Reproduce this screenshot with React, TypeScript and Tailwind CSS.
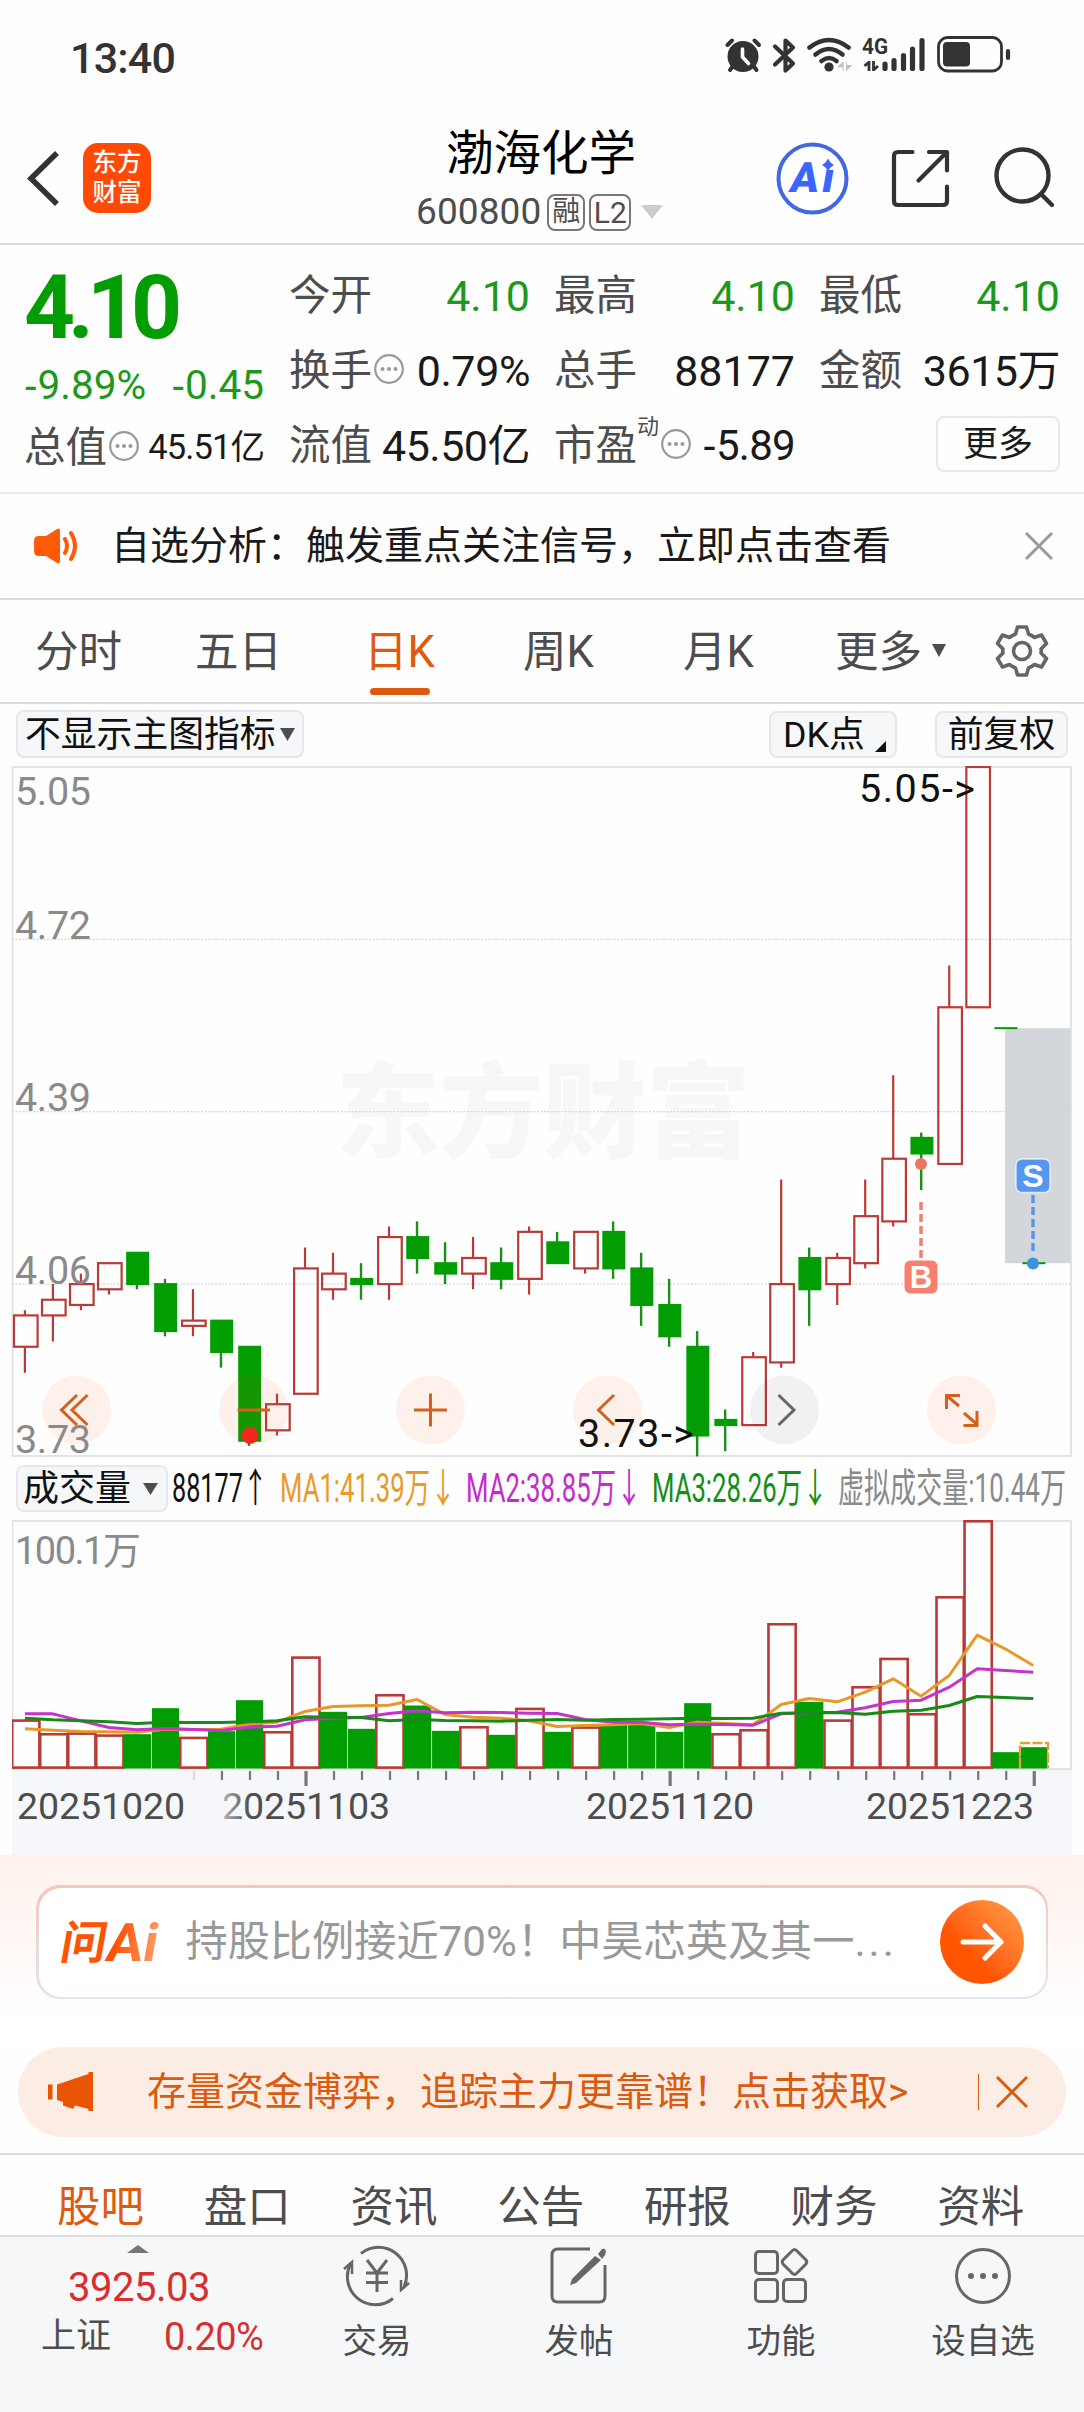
import { useState } from "react";
import type { ReactNode } from "react";

type Candle = [high: number, top: number, bottom: number, low: number, up: boolean];

// high, body top, body bottom, low, rising
const candles: Candle[] = [
  [4.01, 4.0, 3.94, 3.89, true],
  [4.06, 4.03, 4.0, 3.95, true],
  [4.08, 4.06, 4.02, 4.01, true],
  [4.1, 4.1, 4.05, 4.04, true],
  [4.12, 4.12, 4.06, 4.05, false],
  [4.07, 4.06, 3.97, 3.96, false],
  [4.05, 3.99, 3.98, 3.96, true],
  [3.99, 3.99, 3.93, 3.9, false],
  [3.94, 3.94, 3.76, 3.75, false],
  [3.85, 3.83, 3.78, 3.77, true],
  [4.13, 4.09, 3.85, 3.85, true],
  [4.12, 4.08, 4.05, 4.03, true],
  [4.1, 4.07, 4.06, 4.03, false],
  [4.17, 4.15, 4.06, 4.03, true],
  [4.18, 4.15, 4.11, 4.08, false],
  [4.14, 4.1, 4.08, 4.06, false],
  [4.15, 4.11, 4.08, 4.05, true],
  [4.13, 4.1, 4.07, 4.05, false],
  [4.17, 4.16, 4.07, 4.04, true],
  [4.16, 4.14, 4.1, 4.1, false],
  [4.16, 4.16, 4.09, 4.08, true],
  [4.18, 4.16, 4.09, 4.07, false],
  [4.12, 4.09, 4.02, 3.98, false],
  [4.07, 4.02, 3.96, 3.94, false],
  [3.97, 3.94, 3.77, 3.73, false],
  [3.82, 3.8, 3.79, 3.74, false],
  [3.93, 3.92, 3.79, 3.79, true],
  [4.26, 4.06, 3.91, 3.9, true],
  [4.13, 4.11, 4.05, 3.98, false],
  [4.12, 4.11, 4.06, 4.02, true],
  [4.26, 4.19, 4.1, 4.09, true],
  [4.46, 4.3, 4.18, 4.17, true],
  [4.35, 4.34, 4.31, 4.24, false],
  [4.67, 4.59, 4.29, 4.29, true],
  [5.05, 5.05, 4.59, 4.59, true],
  [4.55, 4.55, 4.55, 4.55, false],
  [4.1, 4.1, 4.1, 4.1, false],
];

// bar heights and average lines, in thirds of a pixel above the baseline
const volumes = [
  147, 106, 108, 102, 103, 181, 95, 112, 205, 112, 336, 170, 119, 223, 189, 113, 127, 101, 182, 110, 126, 133, 131,
  110, 196, 106, 118, 436, 200, 147, 247, 332, 166, 517, 745, 49, 64,
];
const volumeDown = [4, 5, 7, 8, 11, 12, 14, 15, 17, 19, 21, 22, 23, 24, 28, 35, 36];
const ma1 = [
  119, 115, 111, 110, 109, 118, 117, 118, 133, 139, 171, 186, 188, 190, 207, 162, 154, 151, 143, 126, 129, 131, 135,
  123, 139, 135, 131, 192, 210, 200, 229, 269, 217, 279, 400, 359, 309,
];
const ma2 = [
  164, 164, 143, 123, 116, 120, 117, 114, 124, 127, 146, 151, 153, 165, 173, 167, 169, 168, 166, 165, 147, 139, 139,
  131, 133, 132, 130, 164, 167, 169, 182, 201, 205, 244, 299, 294, 289,
];
const ma3 = [
  151, 146, 143, 140, 135, 139, 138, 138, 140, 143, 155, 154, 153, 143, 147, 144, 143, 142, 145, 147, 145, 147, 148,
  149, 151, 150, 151, 166, 167, 168, 163, 172, 175, 189, 216, 213, 210,
];

const RED = "#b93a37";
const GREEN = "#029d02";
const cx = (i: number) => 24.9 + 28.01 * i;
const py = (p: number) => 1 + (5.05 - p) * 522.3;
const linePoints = (data: number[]) => data.map((v, i) => `${cx(i)},${248.5 - v / 3}`).join(" ");

const periods = [
  { label: "分时", className: "w-[160px] pl-[35px]" },
  { label: "五日", className: "w-[160px] pl-[35px]" },
  { label: "日K", className: "w-[160px] pl-[44px]" },
  { label: "周K", className: "w-[160px] pl-[43px]" },
  { label: "月K", className: "w-[160px] pl-[43px]" },
];
const sections = ["股吧", "盘口", "资讯", "公告", "研报", "财务", "资料"];

const Dots = () => (
  <svg width="30" height="30" viewBox="0 0 30 30" fill="none">
    <circle cx="15" cy="15" r="13.8" stroke="#999" strokeWidth="2.200" />
    <g fill="#999">
      <circle cx="8.500" cy="15" r="2" />
      <circle cx="15" cy="15" r="2" />
      <circle cx="21.500" cy="15" r="2" />
    </g>
  </svg>
);

const Negative = ({ value }: { value: string }) => (
  <span>
    <span className="font-['Liberation_Sans']">-</span>
    {value}
  </span>
);

const StatusBar = () => (
  <div className="flex h-[115px] items-start justify-between pl-[70px] pr-[72px] pt-[33px]">
    <span className="text-[43px] font-medium leading-[50px] tracking-[-0.800px] text-[#333]">13:40</span>
    <svg width="288" height="42" viewBox="724 34 288 42" fill="none">
      {/* alarm */}
      <g stroke="#333" strokeWidth="4" strokeLinecap="round">
        <path d="M727.500 46L732 41.500M759 46L754.500 41.500M733 67L730 71M753.500 67L756.500 71" />
      </g>
      <circle cx="743" cy="57.500" r="15.500" fill="#333" />
      <path d="M742.500 50v8l6 6.500" stroke="#fff" strokeWidth="3.600" strokeLinecap="round" />
      {/* bluetooth */}
      <path
        d="M775 47.500l18 17-7.500 7V41.500l7.500 7-18 17"
        stroke="#333"
        strokeWidth="4.200"
        strokeLinejoin="round"
        strokeLinecap="round"
      />
      {/* wifi */}
      <g stroke="#333" strokeWidth="4.600" strokeLinecap="round">
        <path d="M809.500 48.500Q829 33.500 848.500 48.500" />
        <path d="M815.500 55.500Q829 44.500 842.500 55.500" />
        <path d="M821.500 62Q829 56 836.500 62" />
      </g>
      <circle cx="829" cy="68" r="4.600" fill="#333" />
      <path d="M843 63v9M843 63l-5 5h5zM846.500 63v9M846.500 71.500l5-5h-5z" fill="#c4c4c4" stroke="#c4c4c4" />
      {/* signal */}
      <text x="862" y="55" fontSize="22" fontWeight="700" textLength="26" lengthAdjust="spacingAndGlyphs" fill="#333">
        4G
      </text>
      <path d="M869 62v10M869 63l-4.500 4M873.500 62v10M873.500 71l4.500-4" stroke="#333" strokeWidth="2.800" />
      <g stroke="#333" strokeWidth="5.200" strokeLinecap="round">
        <path d="M885 65v4.500M894 61.500v8M903.500 56.500v13M912.500 50v19.500M922 41.500v28" />
      </g>
      {/* battery */}
      <rect x="938.500" y="38.500" width="63" height="33.500" rx="9" stroke="#333" strokeWidth="2.800" />
      <rect x="943" y="43" width="27" height="24.500" rx="4" fill="#333" />
      <path d="M1008 52v7" stroke="#333" strokeWidth="4.200" strokeLinecap="round" />
    </svg>
  </div>
);

const Header = () => (
  <header className="relative flex h-[130px] items-start justify-between border-b-2 border-[#dcdcdc]">
    <div className="flex items-center pl-[26px] pt-[28px]">
      <svg width="34" height="56" viewBox="0 0 34 56" fill="none">
        <path d="M31 3L5 28.500L31 54" stroke="#333" strokeWidth="5.600" />
      </svg>
      <div className="ml-[23px] flex h-[70px] w-[68px] flex-col items-center justify-center rounded-[15px] bg-[#ff4a05] text-[24.500px] font-medium leading-[30px] text-white">
        <span>东方</span>
        <span>财富</span>
      </div>
    </div>
    <div className="absolute left-[416px] top-[8px] flex w-[250px] flex-col">
      <h1 className="pl-[30px] text-[47.500px] leading-[62px] text-black">渤海化学</h1>
      <div className="mt-[5px] flex h-[44px] items-center text-[37px] text-[#4d4d4d]">
        <span className="tracking-[0.100px]">600800</span>
        <span className="ml-[6px] flex h-[37px] w-[38px] items-center justify-center rounded-[8px] border-2 border-[#777] text-[28px]">
          融
        </span>
        <span className="ml-[4px] flex h-[37px] w-[42px] items-center justify-center rounded-[8px] border-2 border-[#777] text-[30px]">
          L2
        </span>
        <svg className="ml-[9px]" width="24" height="16" viewBox="0 0 24 16">
          <path d="M1 1H23L12 15Z" fill="#ccc" />
        </svg>
      </div>
    </div>
    <div className="flex pt-[25px]">
      <svg width="76" height="76" viewBox="774 139 76 76">
        <circle cx="812.500" cy="177.500" r="34" fill="#fff" stroke="#4267e0" strokeWidth="4" />
        <text y="191" fontSize="42" fontWeight="900" fill="#3a66fb" transform="translate(34 0) skewX(-10)">
          <tspan x="788">A</tspan>
          <tspan x="820">i</tspan>
        </text>
        <rect x="819" y="156" width="18" height="13" fill="#fff" />
        <path d="M828 157.500L830.500 161.500L834 164L830.500 166.500L828 170L825.500 166.500L822 164L825.500 161.500Z" fill="#3a66fb" />
      </svg>
      <svg
        className="ml-[39px]"
        width="64"
        height="76"
        viewBox="889 139 64 76"
        fill="none"
        stroke="#333"
        strokeWidth="4.200"
        strokeLinecap="round"
        strokeLinejoin="round"
      >
        <path d="M912.500 151H898Q894 151 894 155V200Q894 204 898 204H943Q947 204 947 200V185.500" />
        <path d="M929 151H947V169.500M946 152L918.500 179.500" />
      </svg>
      <svg className="ml-[40px] mr-[27px]" width="64" height="76" viewBox="993 139 64 76" fill="none" stroke="#333" strokeWidth="4.400" strokeLinecap="round">
        <circle cx="1022.500" cy="174.500" r="26" />
        <path d="M1041.500 193.500L1052 204" />
      </svg>
    </div>
  </header>
);

const Stat = ({ label, children }: { label: string; children: ReactNode }) => (
  <div className="flex h-[76px] items-center justify-between">
    <span className="text-[41.500px] text-[#4d4d4d]">{label}</span>
    {children}
  </div>
);

const Quote = () => (
  <section className="flex h-[249px] border-b-2 border-[#ececec] pl-[24px] pt-[13px] text-[43px] leading-none text-[#1a1a1a]">
    <div className="w-[240px]">
      <div className="flex h-[98px] items-center text-[89px] font-bold tracking-[-7px] text-[#029d02]">4.10</div>
      <div className="flex h-[58px] items-center justify-between text-[40.500px] text-[#1c991c]">
        <Negative value="9.89%" />
        <Negative value="0.45" />
      </div>
      <div className="flex h-[67px] items-center">
        <span className="text-[41.500px] text-[#4d4d4d]">总值</span>
        <span className="ml-[2px] -mt-[4px]">
          <Dots />
        </span>
        <span className="ml-auto text-[34.500px] tracking-[-0.900px]">45.51亿</span>
      </div>
    </div>
    <div className="ml-[25px] w-[241px]">
      <Stat label="今开">
        <span className="text-[#1c991c]">4.10</span>
      </Stat>
      <div className="flex h-[74px] items-center">
        <span className="text-[41.500px] text-[#4d4d4d]">换手</span>
        <span className="ml-[2px] -mt-[4px]">
          <Dots />
        </span>
        <span className="ml-auto tracking-[-0.400px]">0.79%</span>
      </div>
      <Stat label="流值">
        <span className="tracking-[-0.500px]">45.50亿</span>
      </Stat>
    </div>
    <div className="ml-[24px] w-[241px]">
      <Stat label="最高">
        <span className="text-[#1c991c]">4.10</span>
      </Stat>
      <div className="flex h-[74px] items-center justify-between">
        <span className="text-[41.500px] text-[#4d4d4d]">总手</span>
        <span>88177</span>
      </div>
      <div className="flex h-[76px] items-center">
        <span className="text-[41.500px] text-[#4d4d4d]">市盈</span>
        <span className="-mt-[38px] text-[22px] text-[#4d4d4d]">动</span>
        <span className="ml-[2px] -mt-[4px]">
          <Dots />
        </span>
        <span className="ml-auto text-[42px] tracking-[-0.700px]">
          <Negative value="5.89" />
        </span>
      </div>
    </div>
    <div className="ml-[24px] w-[241px]">
      <Stat label="最低">
        <span className="text-[#1c991c]">4.10</span>
      </Stat>
      <div className="flex h-[74px] items-center justify-between">
        <span className="text-[41.500px] text-[#4d4d4d]">金额</span>
        <span className="tracking-[-0.500px]">3615万</span>
      </div>
      <div className="flex h-[72px] items-center justify-end">
        <button className="h-[56px] w-[124px] rounded-[8px] border-2 border-[#e8e8e8] text-[35px]">更多</button>
      </div>
    </div>
  </section>
);

const Notice = () => (
  <div className="flex h-[106px] items-center border-b-2 border-[#dcdcdc] pl-[33px] pr-[30px]">
    <svg width="48" height="40" viewBox="0 0 48 40" fill="none">
      <path d="M6 10H13L24 3Q27 1.500 27 5V35Q27 38.500 24 37L13 30H6Q1 30 1 25V15Q1 10 6 10Z" fill="#ff5a0a" />
      <path d="M32 13Q36 20 32 27M38 7Q46 20 38 33" stroke="#ff5a0a" strokeWidth="4" strokeLinecap="round" />
    </svg>
    <span className="ml-[30px] whitespace-nowrap text-[39px] text-[#1a1a1a]">
      自选分析：触发重点关注信号，立即点击查看
    </span>
    <svg className="ml-auto" width="30" height="30" viewBox="0 0 30 30" fill="none">
      <path d="M2 2L28 28M28 2L2 28" stroke="#999" strokeWidth="3" />
    </svg>
  </div>
);

const PeriodTabs = () => {
  const [active, setActive] = useState("日K");

  return (
    <nav className="flex h-[104px] items-center border-b-2 border-[#dcdcdc] text-[43.500px] text-[#4d4d4d]">
      {periods.map((p) => (
        <button key={p.label} onClick={() => setActive(p.label)} className={`relative h-full pt-[4px] text-left ${p.className}`}>
          <span className={p.label === active ? "text-[#dd5a10]" : ""}>{p.label}</span>
          {p.label === active && (
            <span className="absolute bottom-[7px] left-[50px] h-[7px] w-[60px] rounded-full bg-[#dd5a10]" />
          )}
        </button>
      ))}
      <button className="flex items-center pl-[35px] pt-[4px]">
        更多
        <svg className="-mt-[4px] ml-[9px]" width="16" height="14" viewBox="0 0 16 14">
          <path d="M1 0H15L8 13Z" fill="#4d4d4d" />
        </svg>
      </button>
      <svg className="ml-auto mr-[35px]" width="54" height="54" viewBox="0 0 54 54" fill="none" stroke="#666" strokeWidth="3.600">
        <path
          strokeLinejoin="round"
          d="M22.500 3H31.500L33.500 10Q37 11.500 39.500 13.500L46.500 11L51.500 19.500L46 25Q46.500 27 46 29L51.500 34.500L46.500 43L39.500 40.500Q37 42.500 33.500 44L31.500 51H22.500L20.500 44Q17 42.500 14.500 40.500L7.500 43L2.500 34.500L8 29Q7.500 27 8 25L2.500 19.500L7.500 11L14.500 13.500Q17 11.500 20.500 10Z"
        />
        <circle cx="27" cy="27" r="8.500" />
      </svg>
    </nav>
  );
};

const ChartToolbar = () => (
  <div className="flex h-[62px] items-start pl-[16px] pr-[16px] pt-[6px] text-[35.800px] leading-[40px] text-[#111]">
    <button className="flex h-[48px] w-[288px] items-center rounded-[8px] border-2 border-[#e5e7ec] bg-[#f6f7f9] pl-[7px] pt-[2px]">
      不显示主图指标
      <svg className="-mt-[2px] ml-[4px]" width="15" height="13" viewBox="0 0 15 13">
        <path d="M0 0H15L7.500 13Z" fill="#4d4d4d" />
      </svg>
    </button>
    <button className="ml-auto mt-px flex h-[47px] w-[128px] items-center rounded-[8px] border-2 border-[#e5e7ec] bg-[#f6f7f9] pl-[12px] pt-px">
      DK点
      <svg className="ml-[10px] mt-[22px]" width="11" height="11" viewBox="0 0 11 11">
        <path d="M11 0V11H0Z" fill="#111" />
      </svg>
    </button>
    <button className="ml-[38px] mt-px flex h-[47px] w-[133px] items-center justify-center rounded-[8px] border-2 border-[#e5e7ec] bg-[#f6f7f9] pt-px">
      前复权
    </button>
  </div>
);

const PriceChart = () => (
  <svg className="block" width="1084" height="691" viewBox="0 0 1084 691" fill="none">
    <text x="336" y="384" fontSize="104" fontWeight="900" textLength="414" fill="#f7f7f7">
      东方财富
    </text>
    <rect x="12.500" y="1" width="1058.500" height="689" stroke="#e3e3e3" strokeWidth="2" />
    {[4.72, 4.39, 4.06].map((p) => (
      <path key={p} d={`M12 ${py(p)}H1071`} stroke="#d8d8d8" strokeWidth="1.200" strokeDasharray="2 1.500" />
    ))}
    <rect x="1005" y={py(4.55)} width="65.500" height={py(4.1) - py(4.55)} fill="#d3d7dc" />

    {candles.map(([high, top, bottom, low, up], i) => (
      <g key={i}>
        {up ? (
          <>
            <path d={`M${cx(i)} ${py(high)}V${py(top)}M${cx(i)} ${py(bottom)}V${py(low)}`} stroke={RED} strokeWidth="2.200" />
            <rect x={cx(i) - 10.9} y={py(top)} width="23.600" height={py(bottom) - py(top)} stroke={RED} strokeWidth="2.200" />
          </>
        ) : (
          <>
            <path d={`M${cx(i)} ${py(high)}V${py(low)}`} stroke="#1b8f1b" strokeWidth="2.400" />
            <rect x={cx(i) - 10.8} y={py(top) - 1} width="23" height={py(bottom) - py(top) + 2} fill={GREEN} />
          </>
        )}
      </g>
    ))}

    {/* buy and sell marks */}
    <circle cx="921" cy="398" r="6" fill="#ef7563" />
    <path d="M921 436V492" stroke="#f5806f" strokeWidth="3.500" strokeDasharray="8 4" />
    <rect x="904.500" y="494.500" width="33" height="33" rx="6" fill="#f5806f" />
    <text x="921" y="521.500" fontSize="31" fontWeight="700" textAnchor="middle" fill="#fff" className="font-['Liberation_Sans']">
      B
    </text>
    <path d="M1033 429V488" stroke="#5a96e8" strokeWidth="3.500" strokeDasharray="8 4" />
    <circle cx="1033" cy="497.500" r="6" fill="#3c93dd" />
    <rect x="1016" y="393" width="34" height="33.500" rx="6" fill="#5596f0" stroke="#fff" strokeOpacity=".7" strokeWidth="1.500" />
    <text x="1033" y="420.500" fontSize="32" fontWeight="700" textAnchor="middle" fill="#fff" className="font-['Liberation_Sans']">
      S
    </text>

    {/* chart controls */}
    {[76.5, 253.5, 430.5, 607.5, 784.5, 961.5].map((x) => (
      <circle key={x} cx={x} cy="644" r="34.500" fill={x === 784.5 ? "#000" : "#ff5a0a"} fillOpacity={x === 784.5 ? 0.05 : 0.08} />
    ))}
    <circle cx="250" cy="669.500" r="8.500" fill="#f02820" />
    <g stroke="#d4601c" strokeWidth="3">
      <path d="M77 629L61.500 644L77 659M87.500 629L72 644L87.500 659" />
      <path d="M237.500 644H270" />
      <path d="M414 644H447M430.500 627.500V660.500" />
      <path d="M614 629L598.500 644L614 659" />
      <path d="M959 640L946.500 629.500M946.500 643V629.500H960M964 647L976.500 658M963.500 659.500H977V645" />
    </g>
    <path d="M778.500 629L794 644L778.500 659" stroke="#666" strokeWidth="3" />

    <g fontSize="39.500" fill="#8a8a8a">
      <text x="15" y="38.500" textLength="76">5.05</text>
      <text x="15" y="173" textLength="76">4.72</text>
      <text x="15" y="345" textLength="76">4.39</text>
      <text x="15" y="518" textLength="76">4.06</text>
      <text x="15" y="686.500" textLength="76">3.73</text>
    </g>
    <g fontSize="39.500" fill="#111">
      <text x="859" y="36" textLength="116">5.05-&gt;</text>
      <text x="578" y="681" textLength="116">3.73-&gt;</text>
    </g>
  </svg>
);

const VolumeLegend = () => (
  <div className="flex h-[63px] items-start pl-[16px] pt-[8px]">
    <button className="flex h-[47px] w-[152px] items-center rounded-[8px] border-2 border-[#e5e7ec] bg-[#f6f7f9] pl-[5px] text-[36px] leading-[40px] text-[#111]">
      成交量
      <svg className="ml-[12px]" width="15" height="12" viewBox="0 0 15 12">
        <path d="M0 0H15L7.500 12Z" fill="#4d4d4d" />
      </svg>
    </button>
    <svg width="904" height="48" viewBox="168 0 904 48" fontSize="40">
      <text x="172" y="37" textLength="96" lengthAdjust="spacingAndGlyphs" fill="#111">88177↑</text>
      <text x="280" y="37" textLength="176" lengthAdjust="spacingAndGlyphs" fill="#eb9a28">MA1:41.39万↓</text>
      <text x="466" y="37" textLength="176" lengthAdjust="spacingAndGlyphs" fill="#c42ccb">MA2:38.85万↓</text>
      <text x="652" y="37" textLength="176" lengthAdjust="spacingAndGlyphs" fill="#148f14">MA3:28.26万↓</text>
      <text x="838" y="37" textLength="228" lengthAdjust="spacingAndGlyphs" fill="#8a8a8a">虚拟成交量:10.44万</text>
    </svg>
  </div>
);

const VolumeChart = () => (
  <div className="px-[12px]">
    <svg className="block" width="1060" height="335" viewBox="12 0 1060 335" fill="none">
      <defs>
        <linearGradient id="dateFade" x1="223" x2="250" y1="0" y2="0" gradientUnits="userSpaceOnUse">
          <stop offset="0" stopColor="#b5b5b5" />
          <stop offset="1" stopColor="#4d4d4d" />
        </linearGradient>
      </defs>
      <rect x="12" y="250" width="1060" height="85" fill="#f6f7fa" />
      <rect x="12.500" y="1" width="1058.500" height="248" stroke="#e3e3e3" strokeWidth="2" />
      <text x="15" y="44" fontSize="38" fill="#8a8a8a" textLength="126">100.1万</text>
      {volumes.map((v, i) => {
        const h = v / 3;
        return volumeDown.includes(i) ? (
          <rect key={i} x={cx(i) - 13} y={248.5 - h} width="27.200" height={h} fill={GREEN} />
        ) : (
          <rect key={i} x={cx(i) - 12.7} y={249.6 - h} width="27.200" height={h - 2} stroke={RED} strokeWidth="2.600" />
        );
      })}
      <path d="M1020 248V223H1048V248" stroke="#e6a030" strokeWidth="2.400" strokeDasharray="10 2.500" />
      <g strokeWidth="3" strokeLinejoin="round">
        <polyline points={linePoints(ma1)} stroke="#e6992b" />
        <polyline points={linePoints(ma2)} stroke="#c433cb" />
        <polyline points={linePoints(ma3)} stroke="#178a17" />
      </g>
      {candles.map((_, i) => {
        if (i < 6) return null;
        const major = i === 10 || i === 23 || i === 36;
        return (
          <path
            key={i}
            d={`M${cx(i) + 1} 251V${major ? 266 : 260}`}
            stroke={i === 6 ? "#dcdcdc" : "#777"}
            strokeWidth={major ? 3.2 : 2.2}
          />
        );
      })}
      <g fontSize="37.500" fill="#4d4d4d">
        <text x="17" y="299" textLength="168">20251020</text>
        <text x="222" y="299" textLength="168" fill="url(#dateFade)">20251103</text>
        <text x="586" y="299" textLength="168">20251120</text>
        <text x="866" y="299" textLength="168">20251223</text>
      </g>
    </svg>
  </div>
);

const AskAi = () => (
  <div className="h-[192px] bg-linear-to-b from-[#fff2ed] to-white to-[168px] px-[36px] pt-[30px]">
    <div className="rounded-[24px] bg-linear-to-b from-[#f4c5bc] to-[#dfe7f1] p-[2.500px]">
      <div className="flex h-[109px] items-center rounded-[22px] bg-white pl-[20px] pr-[22px]">
        <svg width="100" height="50" viewBox="58 0 100 50" fill="url(#askFill)">
          <defs>
            <linearGradient id="askFill" x1="60" x2="156" y1="0" y2="0" gradientUnits="userSpaceOnUse">
              <stop offset="0.550" stopColor="#fb5407" />
              <stop offset="1" stopColor="#ff9d6c" />
            </linearGradient>
          </defs>
          <g fontWeight="700" transform="translate(7 0) skewX(-10)">
            <text x="58" y="42" fontSize="46">
              问
            </text>
            <text x="104" y="44" fontSize="53" textLength="51" lengthAdjust="spacingAndGlyphs">
              Ai
            </text>
          </g>
        </svg>
        <span className="ml-[27px] whitespace-nowrap text-[42.200px] text-[#999]">
          持股比例接近70%！中昊芯英及其一<span className="tracking-[3px]">...</span>
        </span>
        <button className="ml-auto flex h-[84px] w-[84px] shrink-0 items-center justify-center rounded-full bg-linear-to-bl from-[#ff9440] from-10% to-[#ff5500] to-65%">
          <svg width="44" height="38" viewBox="0 0 44 38" fill="none">
            <path d="M3 19H40M25 3L41 19L25 35" stroke="#fff" strokeWidth="5" strokeLinecap="round" strokeLinejoin="round" />
          </svg>
        </button>
      </div>
    </div>
  </div>
);

const Banner = () => (
  <div className="mx-[18px] flex h-[90px] items-center rounded-full bg-[#fcede4] pl-[29px] pr-[37px] text-[#d95b10]">
    <svg width="48" height="40" viewBox="0 0 48 40" fill="#e95504">
      <rect x="1" y="12.500" width="4.500" height="15" />
      <path d="M10 12.500L41.500 2V0H46V39H41.500V37L28 33.500L26 37L16 33.500V30L10 28Z" />
    </svg>
    <span className="ml-[52px] whitespace-nowrap text-[39px]">存量资金博弈，追踪主力更靠谱！点击获取&gt;</span>
    <span className="ml-auto h-[36px] w-[1.500px] bg-[#d95b10]" />
    <svg className="ml-[16px]" width="34" height="34" viewBox="0 0 34 34" fill="none">
      <path d="M2 2L32 32M32 2L2 32" stroke="#d95b10" strokeWidth="3" />
    </svg>
  </div>
);

const SectionTabs = () => (
  <nav className="mt-[16px] flex h-[84px] items-center border-y-2 border-[#dcdcdc] pl-[57px] pt-[26px] text-[43.500px] leading-[50px] text-[#4d4d4d]">
    {sections.map((s, i) => (
      <a key={s} className={i === 0 ? "w-[146.800px] text-[#dd5a10]" : "w-[146.800px]"}>
        {s}
      </a>
    ))}
  </nav>
);

const BottomItem = ({ label, children }: { label: string; children: ReactNode }) => (
  <button className="flex w-[202px] flex-col items-center text-[34.500px] leading-[40px] text-[#4d4d4d]">
    <svg width="68" height="64" viewBox="0 0 68 64" fill="none" stroke="#666" strokeWidth="3">
      {children}
    </svg>
    <span className="mt-[13px]">{label}</span>
  </button>
);

const BottomBar = () => (
  <footer className="flex h-[175px] bg-[#f6f7f9]">
    <div className="w-[276px]">
      <svg className="ml-[127px] mt-[8px] block" width="22" height="8" viewBox="0 0 22 8">
        <path d="M0 8L11 0L22 8Z" fill="#777" />
      </svg>
      <div className="mt-[12px] pl-[68px] text-[40px] leading-[46px] tracking-[-0.500px] text-[#d5302f]">3925.03</div>
      <div className="mt-[4px] flex items-center pl-[41px] leading-[44px]">
        <span className="text-[35px] text-[#4d4d4d]">上证</span>
        <span className="ml-[53px] text-[38px] tracking-[-0.500px] text-[#d5302f]">0.20%</span>
      </div>
    </div>
    <div className="flex pt-[7px]">
      <BottomItem label="交易">
        <path d="M18 9.500A28 28 0 0 1 61 43M50 54.500A28 28 0 0 1 8 19" />
        <path d="M1 25L9 18V30M66 39L58 46V36" strokeWidth="2.500" />
        <path d="M24 16L34 29L44 16M34 29V48M23 29H45M23 38.500H45" />
      </BottomItem>
      <BottomItem label="发帖">
        <path d="M45 5H13Q7 5 7 11V52Q7 58 13 58H54Q60 58 60 52V21" />
        <path d="M50 12L56 16L31 39L25 41L27 35Z" fill="#666" stroke="none" />
        <path d="M53 10L57 5Q60 4 61 7L60 11L57 15Z" fill="#666" stroke="none" />
      </BottomItem>
      <BottomItem label="功能">
        <rect x="8.500" y="7.500" width="22" height="22" rx="3.500" />
        <rect x="8.500" y="35.500" width="22" height="22" rx="3.500" />
        <rect x="36.500" y="35.500" width="22" height="22" rx="3.500" />
        <path d="M45.500 6.500Q47.500 4.500 49.500 6.500L59 16Q60.500 18 59 20L49.500 29.500Q47.500 31.500 45.500 29.500L36 20Q34.500 18 36 16Z" />
      </BottomItem>
      <BottomItem label="设自选">
        <circle cx="34" cy="32" r="26.500" />
        <g fill="#666" stroke="none">
          <circle cx="22" cy="32" r="3" />
          <circle cx="34" cy="32" r="3" />
          <circle cx="46" cy="32" r="3" />
        </g>
      </BottomItem>
    </div>
  </footer>
);

const App = () => {
  return (
    <div className="w-[1084px] h-[2412px] overflow-hidden bg-[#fefefe] font-[Roboto,'Noto_Sans_CJK_SC',sans-serif]">
      <StatusBar />
      <Header />
      <Quote />
      <Notice />
      <PeriodTabs />
      <ChartToolbar />
      <PriceChart />
      <VolumeLegend />
      <VolumeChart />
      <AskAi />
      <Banner />
      <SectionTabs />
      <BottomBar />
    </div>
  );
};

export default App;
